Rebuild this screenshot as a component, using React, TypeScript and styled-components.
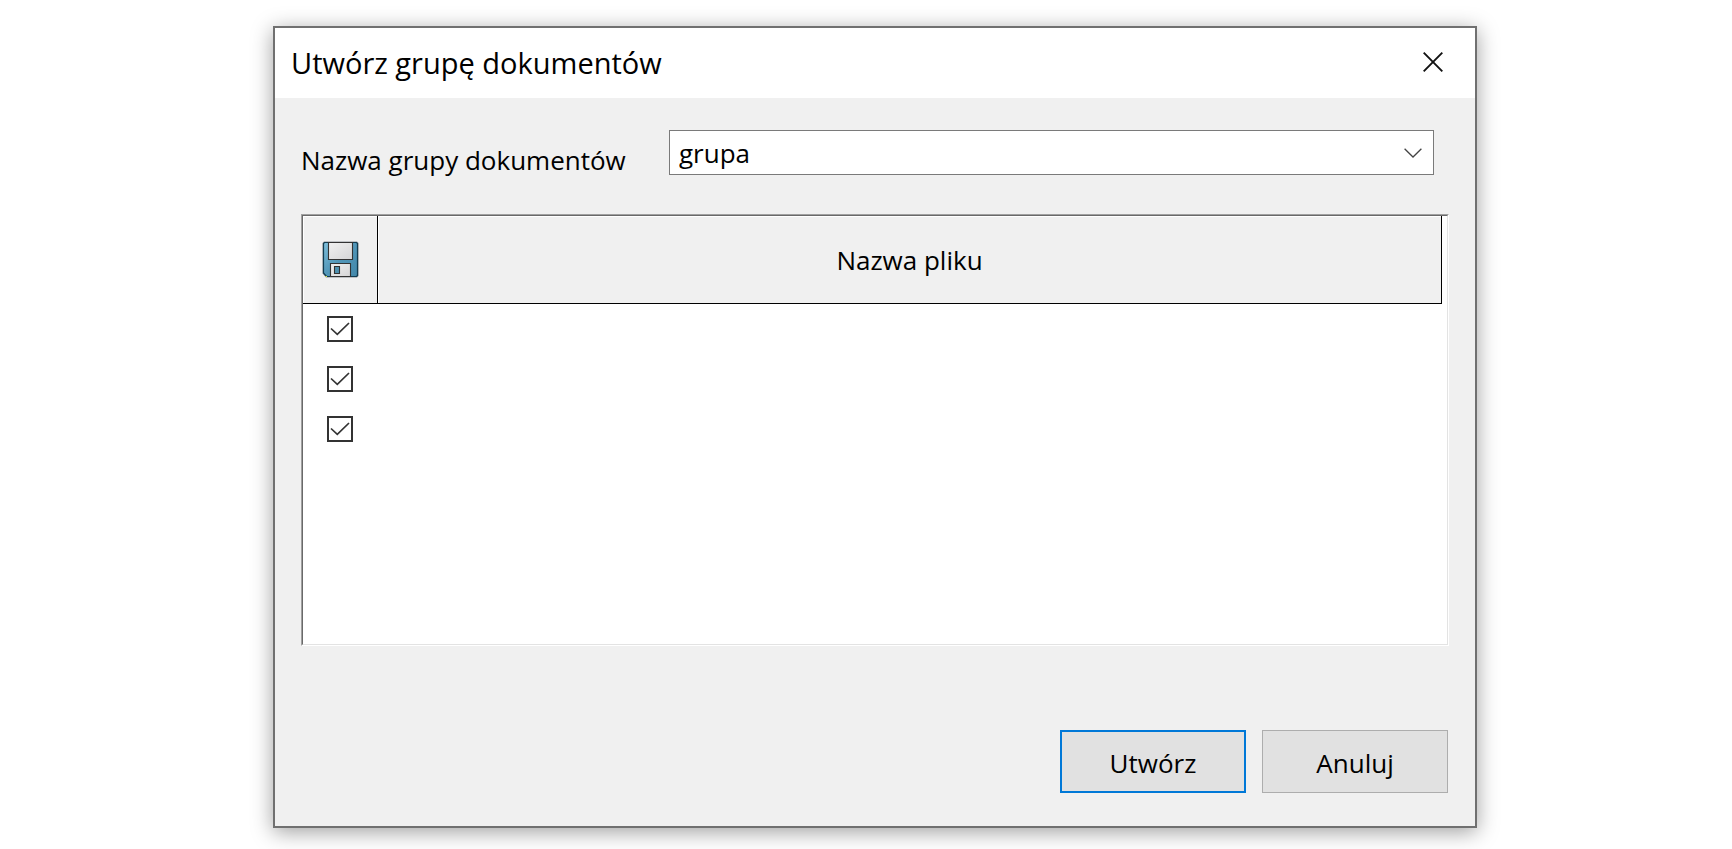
import React, { useState } from "react";
import styled, { createGlobalStyle } from "styled-components";

const GlobalStyle = createGlobalStyle`
  *, *::before, *::after { box-sizing: border-box; }
  body {
    margin: 0;
    background: #fff;
    color: #000;
    font-family: "Open Sans", "Noto Sans", sans-serif;
    font-size: 26px;
    line-height: 36px;
  }
  button, select, input { font: inherit; color: inherit; margin: 0; }
`;

const Page = styled.main`
  padding: 26px 255px 21px 273px;
`;

const Dialog = styled.section`
  display: flex;
  flex-direction: column;
  border: 2px solid #707070;
  background: #f0f0f0;
  box-shadow: 0 4px 20px rgba(0, 0, 0, 0.38);
`;

const TitleBar = styled.header`
  display: flex;
  align-items: center;
  justify-content: space-between;
  height: 70px;
  padding: 0 22px 0 16px;
  background: #fff;
`;

const Title = styled.h1`
  margin: 0;
  font-size: 29px;
  font-weight: 400;
  line-height: 36px;
`;

const CloseButton = styled.button`
  display: grid;
  place-items: center;
  width: 40px;
  height: 40px;
  padding: 0 0 2px;
  border: 0;
  background: none;
`;

const Form = styled.form`
  display: flex;
  flex-direction: column;
  padding: 32px 26px 33px;
`;

const Field = styled.div`
  display: grid;
  grid-template-columns: 368px 1fr;
  align-items: start;
  margin-right: 15px;
`;

const FieldLabel = styled.label`
  padding-top: 12px;
`;

const SelectBox = styled.div`
  display: grid;
  align-items: center;

  > * { grid-area: 1 / 1; }

  > svg {
    justify-self: end;
    margin-right: 12px;
    pointer-events: none;
  }
`;

const Select = styled.select`
  appearance: none;
  width: 100%;
  height: 45px;
  padding: 0 40px 0 9px;
  border: 1px solid #7a7a7a;
  border-radius: 0;
  background: #fff;
  line-height: 36px;
`;

const ListFrame = styled.div`
  min-height: 432px;
  margin-top: 36px;
  border: 1px solid;
  border-color: #a0a0a0 #fff #fff #a0a0a0;
`;

const ListBody = styled.div`
  min-height: 430px;
  padding-right: 5px;
  border: 1px solid;
  border-color: #696969 #e3e3e3 #e3e3e3 #696969;
  background: #fff;
`;

const FileTable = styled.table`
  width: 100%;
  border-collapse: separate;
  border-spacing: 0;
  table-layout: fixed;
`;

const HeadCell = styled.th<{ $width?: number }>`
  width: ${({ $width }) => ($width ? `${$width}px` : "auto")};
  height: 88px;
  padding: 0;
  border: solid #000;
  border-width: 0 1px 1px 0;
  background: #f0f0f0;
  box-shadow: inset 1px 1px #fff;
  font-weight: 400;
  vertical-align: middle;

  > svg { display: block; margin: 0 auto; }
`;

const Cell = styled.td`
  height: 50px;
  padding: 0 1px 0 0;
`;

const CheckWrap = styled.label`
  display: grid;
  place-items: center;
  width: 26px;
  height: 26px;
  margin: 0 auto;

  > * { grid-area: 1 / 1; }
  > svg { pointer-events: none; visibility: hidden; }
  > input:checked + svg { visibility: visible; }
`;

const CheckInput = styled.input`
  appearance: none;
  width: 26px;
  height: 26px;
  border: 2px solid #333;
  background: #fff;
`;

const Actions = styled.footer`
  display: flex;
  justify-content: flex-end;
  gap: 16px;
  margin-top: 84px;
  padding-right: 1px;
`;

const Button = styled.button<{ $primary?: boolean }>`
  width: 186px;
  height: 63px;
  padding: 2px 0 0;
  border: ${({ $primary }) => ($primary ? "2px solid #0078d7" : "1px solid #adadad")};
  background: #e1e1e1;
`;

const CloseIcon = () => (
  <svg width="20" height="20" viewBox="0 0 20 20" aria-hidden="true">
    <path d="M.7.7 19.3 19.3M19.3.7.7 19.3" fill="none" stroke="#111" strokeWidth="1.9" />
  </svg>
);

const ChevronIcon = () => (
  <svg width="18" height="10" viewBox="0 0 18 10" aria-hidden="true">
    <path d="M.6.7 9 9 17.4.7" fill="none" stroke="#444" strokeWidth="1.3" />
  </svg>
);

const CheckIcon = () => (
  <svg width="20" height="14" viewBox="0 0 20 14" aria-hidden="true">
    <path d="M1 6.5 7.3 12.4 19 1" fill="none" stroke="#333" strokeWidth="1.7" />
  </svg>
);

const FloppyIcon = () => (
  <svg width="37" height="37" viewBox="0 0 37 37" role="img" aria-label="Zapisz">
    <defs>
      <linearGradient id="shell" x1="0" y1="0" x2="1" y2="1">
        <stop offset="0" stopColor="#7fbfdb" />
        <stop offset="0.5" stopColor="#5196b8" />
        <stop offset="1" stopColor="#4287a9" />
      </linearGradient>
      <linearGradient id="plate" x1="0" y1="0" x2="1" y2="1">
        <stop offset="0" stopColor="#f1f1f1" />
        <stop offset="1" stopColor="#d5d5d6" />
      </linearGradient>
    </defs>
    <path d="M2 .5h33l1.5 1.5v33L35 36.5H4L.5 32.5V2z" fill="#8b9298" />
    <path d="M2.5 1.5h32l1 1v32l-1 1h-30l-3-3.5V2.5z" fill="url(#shell)" stroke="#123c50" strokeWidth="1.2" />
    <path d="M6.5 1.5h24v17h-24z" fill="url(#plate)" stroke="#333" strokeWidth="1.1" />
    <path d="M8.5 22.5h20v13h-20z" fill="url(#plate)" stroke="#333" strokeWidth="1.1" />
    <path d="M12.5 25.5h5v7h-5z" fill="#4e91b0" stroke="#333" strokeWidth="1.1" />
    <path d="M3.5 35.5h1.5" stroke="#d8e84a" />
  </svg>
);

export default function App() {
  const [checked, setChecked] = useState([true, true, true]);
  const toggle = (index: number) =>
    setChecked((rows) => rows.map((value, i) => (i === index ? !value : value)));

  return (
    <>
      <GlobalStyle />
      <Page>
        <Dialog role="dialog" aria-labelledby="dialog-title">
          <TitleBar>
            <Title id="dialog-title">Utwórz grupę dokumentów</Title>
            <CloseButton type="button" aria-label="Zamknij">
              <CloseIcon />
            </CloseButton>
          </TitleBar>
          <Form onSubmit={(event) => event.preventDefault()}>
            <Field>
              <FieldLabel htmlFor="group-name">Nazwa grupy dokumentów</FieldLabel>
              <SelectBox>
                <Select id="group-name" defaultValue="grupa">
                  <option value="grupa">grupa</option>
                </Select>
                <ChevronIcon />
              </SelectBox>
            </Field>
            <ListFrame>
              <ListBody>
                <FileTable>
                  <thead>
                    <tr>
                      <HeadCell scope="col" $width={75}>
                        <FloppyIcon />
                      </HeadCell>
                      <HeadCell scope="col">Nazwa pliku</HeadCell>
                    </tr>
                  </thead>
                  <tbody>
                    {checked.map((value, index) => (
                      <tr key={index}>
                        <Cell>
                          <CheckWrap>
                            <CheckInput
                              type="checkbox"
                              aria-label={`Plik ${index + 1}`}
                              checked={value}
                              onChange={() => toggle(index)}
                            />
                            <CheckIcon />
                          </CheckWrap>
                        </Cell>
                        <Cell />
                      </tr>
                    ))}
                  </tbody>
                </FileTable>
              </ListBody>
            </ListFrame>
            <Actions>
              <Button type="submit" $primary>
                Utwórz
              </Button>
              <Button type="button">Anuluj</Button>
            </Actions>
          </Form>
        </Dialog>
      </Page>
    </>
  );
}
